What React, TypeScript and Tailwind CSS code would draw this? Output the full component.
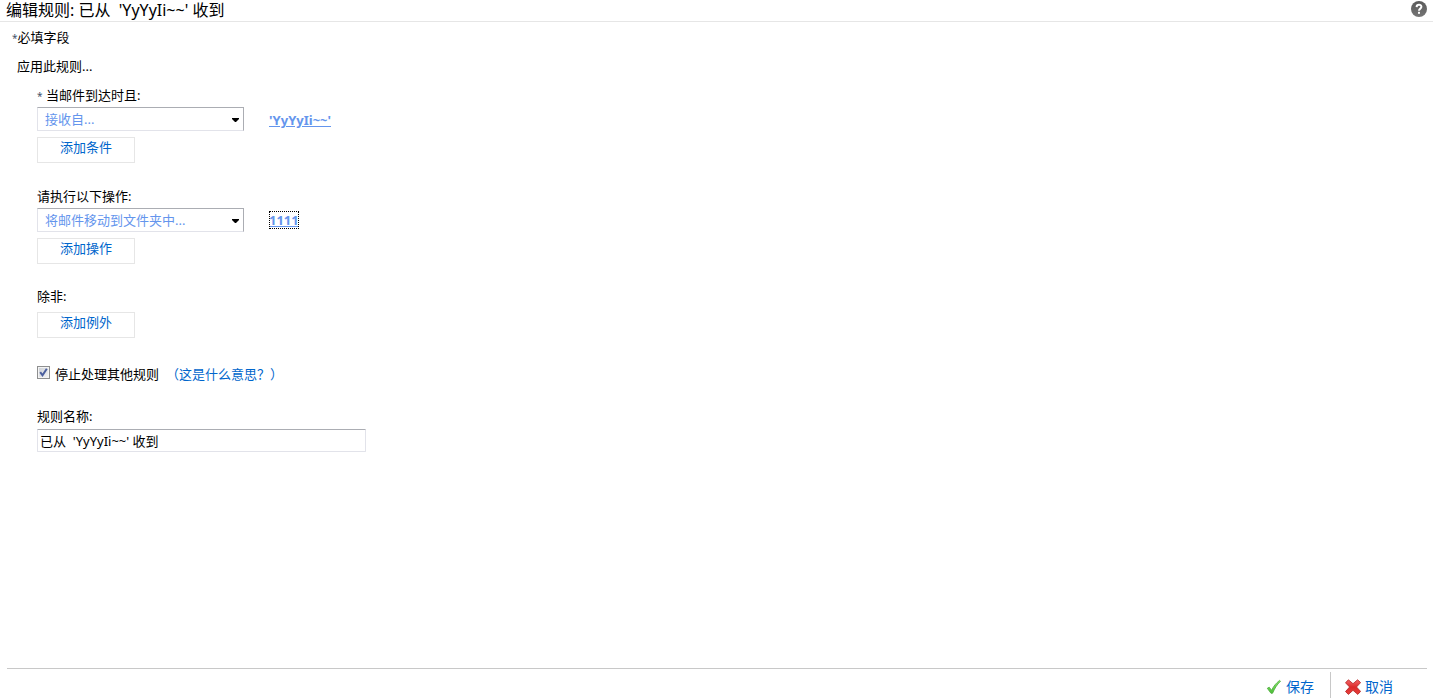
import { useState, type ReactElement } from "react";

const RULE_NAME = "已从  'YyYyIi~~' 收到";

export default function App(): ReactElement {
  return (
    <div className="flex min-h-screen flex-col bg-white font-['Noto_Sans','Noto_Sans_CJK_SC',sans-serif] text-[13px] leading-5 text-black">
      <header className="flex h-[22px] shrink-0 items-start justify-between border-b border-[#e6e6e6] px-1.5">
        <h1 className="text-base leading-5 whitespace-pre">编辑规则: {RULE_NAME}</h1>
        <button type="button" aria-label="帮助" className="mt-px">
          <HelpIcon />
        </button>
      </header>
      <RuleForm />
      <Footer />
    </div>
  );
}

function RuleForm(): ReactElement {
  const [name, setName] = useState(RULE_NAME);
  const [stop, setStop] = useState(true);

  return (
    <main className="flex-1 pt-[5px]">
      <p className="pl-3">
        <RequiredMark />
        必填字段
      </p>
      <h2 className="mt-[9px] pl-[17px]">应用此规则...</h2>
      <div className="mt-[9px] flex flex-col items-start pl-[37px]">
        <label htmlFor="condition">
          <RequiredMark /> 当邮件到达时且:
        </label>
        <div className="mt-0.5 flex items-center gap-[25px]">
          <RuleSelect id="condition" value="接收自..." />
          <a href="#sender" className="pt-0.5 font-bold text-[#6495ed] underline">
            &apos;YyYyIi~~&apos;
          </a>
        </div>
        <AddButton text="添加条件" />

        <label htmlFor="action" className="mt-[23px]">
          请执行以下操作:
        </label>
        <div className="mt-0.5 flex items-center gap-[25px]">
          <RuleSelect id="action" value="将邮件移动到文件夹中..." />
          <a
            href="#folder"
            className="leading-[18px] font-bold text-[#6495ed] underline outline-1 -outline-offset-1 outline-black outline-dotted"
          >
            1111
          </a>
        </div>
        <AddButton text="添加操作" />

        <p className="mt-[22px]">除非:</p>
        <AddButton text="添加例外" />

        <div className="mt-[26px] flex items-center">
          <span className="relative mb-1 flex">
            <input
              id="stop"
              type="checkbox"
              checked={stop}
              onChange={(e) => setStop(e.target.checked)}
              className="peer h-[13px] w-[13px] appearance-none border border-[#8e8f8f] bg-gradient-to-br from-[#cbcfd5] to-[#f6f6f6] shadow-[inset_0_0_0_1px_#f4f4f4]"
            />
            <svg
              viewBox="0 0 13 13"
              width="13"
              height="13"
              aria-hidden="true"
              className="pointer-events-none absolute inset-0 hidden peer-checked:block"
            >
              <path d="M3.2 6.2 5.5 9.3 9.8 2.8" fill="none" stroke="#4b5f9e" strokeWidth="2" />
            </svg>
          </span>
          <label htmlFor="stop" className="ml-[5px]">
            停止处理其他规则
          </label>
          <a href="#more" className="ml-[7px] text-[#0066cc]">
            （这是什么意思？）
          </a>
        </div>

        <label htmlFor="rule-name" className="mt-[22px]">
          规则名称:
        </label>
        <input
          id="rule-name"
          type="text"
          value={name}
          onChange={(e) => setName(e.target.value)}
          className="mt-[3px] h-[23px] w-[329px] rounded-[1px] border border-[#e2e3ea] border-t-[#abadb3] px-0.5 whitespace-pre"
        />
      </div>
    </main>
  );
}

function RequiredMark(): ReactElement {
  return <span className="text-[10px] leading-none text-[#44546a]">*</span>;
}

function RuleSelect({ id, value }: { id: string; value: string }): ReactElement {
  return (
    <div className="relative flex">
      <select
        id={id}
        className="h-6 w-[207px] appearance-none border border-[#e2e3ea] border-t-[#abadb3] border-r-[#abadb3] bg-white px-[7px] text-[#6495ed]"
      >
        <option>{value}</option>
      </select>
      <svg
        viewBox="0 0 7 4"
        width="7"
        height="4"
        aria-hidden="true"
        className="pointer-events-none absolute top-[11px] right-[5px]"
      >
        <path d="M0 0h7v1L4 4H3L0 1Z" fill="#000" />
      </svg>
    </div>
  );
}

function AddButton({ text }: { text: string }): ReactElement {
  return (
    <button
      type="button"
      className="mt-1.5 h-[26px] w-[98px] border border-[#e6e6e6] pb-1.5 leading-[18px] text-[#0066cc]"
    >
      {text}
    </button>
  );
}

function Footer(): ReactElement {
  return (
    <footer className="mr-1.5 ml-[7px] flex h-[30px] shrink-0 items-end justify-end border-t border-[#c8c8c8] pr-[34px] text-sm text-[#0066cc]">
      <button type="button" className="flex h-[26px] items-center gap-1 pt-1 pr-4">
        <CheckIcon />
        保存
      </button>
      <button
        type="button"
        className="flex h-[26px] items-center gap-1 border-l border-[#c8c8c8] pt-1 pl-3.5"
      >
        <CrossIcon />
        取消
      </button>
    </footer>
  );
}

function HelpIcon(): ReactElement {
  return (
    <svg viewBox="0 0 16 16" width="16" height="16" aria-hidden="true">
      <defs>
        <linearGradient id="help" x1="0" y1="0" x2="0" y2="1">
          <stop offset="0" stopColor="#5a5a5a" />
          <stop offset="1" stopColor="#767676" />
        </linearGradient>
      </defs>
      <circle cx="8" cy="8" r="8" fill="url(#help)" />
      <path
        d="M5.6 6.1C5.7 3.1 10.4 3.1 10.4 5.8 10.4 7.6 8 7.7 8 9.7"
        fill="none"
        stroke="#fff"
        strokeWidth="2"
      />
      <rect x="7" y="10.8" width="2" height="2" fill="#fff" />
    </svg>
  );
}

function CheckIcon(): ReactElement {
  return (
    <svg viewBox="0 0 16 16" width="16" height="16" aria-hidden="true">
      <defs>
        <linearGradient id="check" x1="0" y1="0" x2="0" y2="1">
          <stop offset="0" stopColor="#8be86a" />
          <stop offset="1" stopColor="#4cc038" />
        </linearGradient>
      </defs>
      <path
        d="M1.3 9.3 3.2 8.2 5.6 11.3C7.5 7.2 10 4.2 13.6 1.4L14.5 2.2C10.8 5.8 8.6 9.5 6.6 14.2L5 14.3Z"
        fill="url(#check)"
        stroke="#4aa83a"
        strokeWidth="0.8"
      />
    </svg>
  );
}

function CrossIcon(): ReactElement {
  return (
    <svg viewBox="0 0 16 16" width="16" height="16" aria-hidden="true">
      <defs>
        <linearGradient id="cross" x1="0" y1="0" x2="0" y2="1">
          <stop offset="0" stopColor="#f4686a" />
          <stop offset="0.5" stopColor="#dc2a2a" />
          <stop offset="1" stopColor="#e8413c" />
        </linearGradient>
      </defs>
      <path
        d="M3.4 0.8 8 4.7 12.6 0.8 15.6 3.6 11.5 8 15.6 12.4 12.8 15.4 8 11.3 3.4 15.4 0.5 12.6 4.6 8 0.5 3.8Z"
        fill="url(#cross)"
        stroke="#b32020"
        strokeWidth="0.8"
        strokeLinejoin="round"
      />
    </svg>
  );
}
